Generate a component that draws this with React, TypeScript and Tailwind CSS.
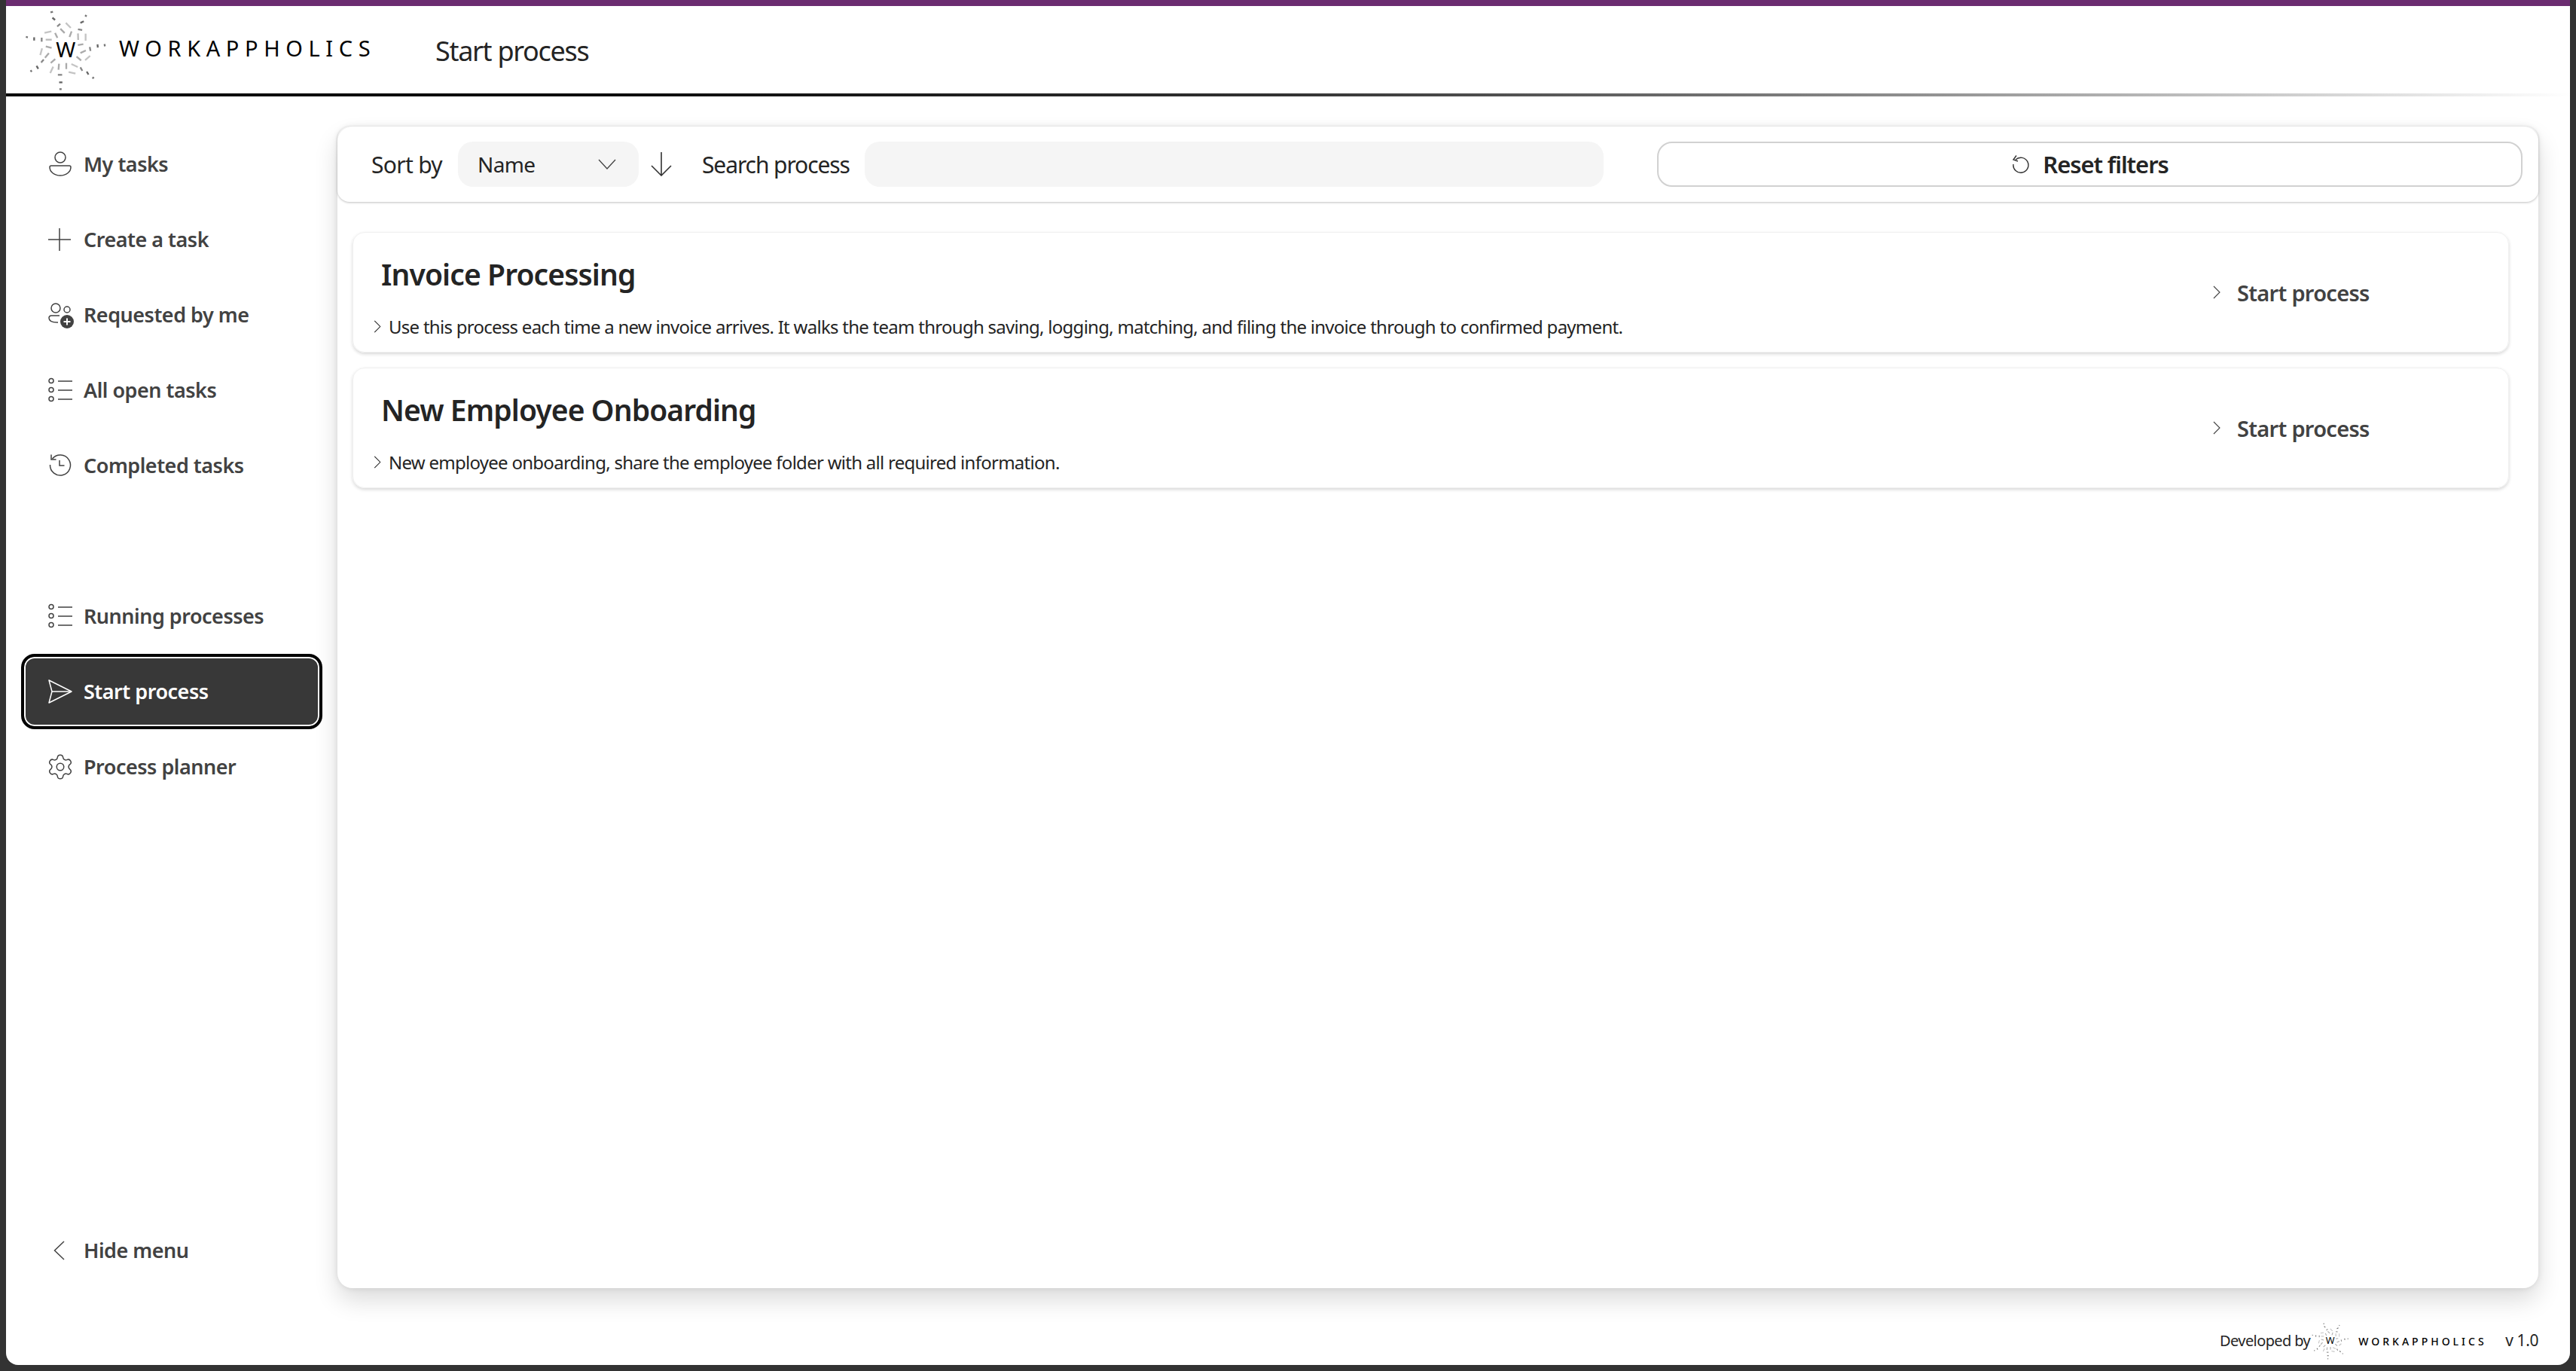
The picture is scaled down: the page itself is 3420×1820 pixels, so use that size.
import React from 'react';
import { Settings } from 'lucide-react';

const FONT = "font-['Noto_Sans','Open_Sans',sans-serif]";

// [x, y, angle, length, grey] in the logo's own coordinates
const LOGO_DASHES: [number, number, number, number, string][] = [
  [147, 45, -15, 10, '#777'], [155, 72, 40, 14, '#666'], [175, 97, -40, 16, '#888'],
  [283, 60, 35, 8, '#777'], [268, 85, -25, 15, '#666'], [260, 115, 10, 17, '#888'],
  [358, 177, 80, 9, '#777'], [330, 180, 85, 13, '#666'], [300, 192, 80, 16, '#888'],
  [312, 307, -45, 8, '#777'], [290, 288, 60, 14, '#666'], [265, 272, 60, 16, '#888'],
  [182, 352, 0, 9, '#777'], [183, 325, 0, 13, '#666'], [180, 295, 0, 17, '#888'],
  [65, 280, 55, 8, '#777'], [90, 265, 60, 14, '#666'], [110, 240, -50, 16, '#888'],
  [48, 145, 15, 8, '#777'], [77, 152, 90, 13, '#666'], [107, 155, 90, 16, '#888'],
  [213, 98, 45, 28, '#c4c4c4'], [132, 125, -12, 28, '#c4c4c4'], [190, 120, 45, 24, '#aaa'],
  [165, 138, 65, 22, '#aaa'], [222, 133, -70, 24, '#aaa'], [252, 143, 88, 26, '#bbb'],
  [282, 145, 90, 28, '#c4c4c4'], [135, 155, 0, 24, '#bbb'], [135, 185, 15, 24, '#aaa'],
  [105, 203, -75, 28, '#c4c4c4'], [128, 218, -50, 24, '#aaa'], [152, 240, -42, 24, '#aaa'],
  [147, 275, -65, 28, '#c4c4c4'], [175, 263, -85, 24, '#aaa'], [205, 260, 90, 24, '#aaa'],
  [238, 258, 25, 28, '#c4c4c4'], [228, 287, 12, 28, '#c4c4c4'], [255, 230, 40, 24, '#aaa'],
  [290, 228, -40, 26, '#c4c4c4'], [272, 203, -25, 24, '#aaa'], [262, 175, -10, 22, '#aaa'],
];

const Logo: React.FC<{ className: string }> = ({ className }) => (
  <svg viewBox="40 30 330 330" className={className}>
    {LOGO_DASHES.map(([x, y, angle, len, fill], i) => (
      <rect
        key={i}
        x={x - len / 2}
        y={y - 3.5}
        width={len}
        height={7}
        fill={fill}
        transform={`rotate(${angle} ${x} ${y})`}
      />
    ))}
    <text x="203" y="224" textAnchor="middle" fontSize="84" fontFamily="Noto Sans, sans-serif" fill="#000">
      W
    </text>
  </svg>
);

const iconClass = 'w-8 h-8 overflow-visible shrink-0';

const PersonIcon = () => (
  <svg viewBox="0 0 32 32" fill="none" stroke="currentColor" strokeWidth="1.5" className={iconClass}>
    <circle cx="16" cy="7" r="7" />
    <path d="M4 18h24a2 2 0 0 1 2 2c0 6-6 11-14 11S2 26 2 20a2 2 0 0 1 2-2z" />
  </svg>
);

const PlusIcon = () => (
  <svg viewBox="0 0 32 32" fill="none" stroke="currentColor" strokeWidth="1.5" className={iconClass}>
    <path d="M15 1v30M0 16h30" />
  </svg>
);

const PeopleAddIcon = () => (
  <svg viewBox="0 0 32 32" fill="none" stroke="currentColor" strokeWidth="1.5" className={iconClass}>
    <circle cx="10" cy="7" r="6" />
    <circle cx="25" cy="9" r="4" />
    <path d="M15 17H4a3 3 0 0 0-3 3c0 3 3 6 11 6h1" />
    <circle cx="25" cy="25" r="9" fill="currentColor" stroke="none" />
    <path d="M25 20.5v9M20.5 25h9" stroke="#fff" strokeWidth="2" />
  </svg>
);

const ListIcon = () => (
  <svg viewBox="0 0 32 32" fill="none" stroke="currentColor" strokeWidth="1.5" className={iconClass}>
    <circle cx="4" cy="3.5" r="3" />
    <circle cx="4" cy="15.5" r="3" />
    <circle cx="4" cy="27.5" r="3" />
    <path d="M13 4h19M13 16h19M13 28h19" />
  </svg>
);

const HistoryIcon = () => (
  <svg viewBox="0 0 32 32" fill="none" stroke="currentColor" strokeWidth="1.5" className={iconClass}>
    <path d="M5.5 7A13.5 13.5 0 1 1 2.5 15" />
    <path d="M4 1.5V8h6.5M15 9v7h6.5" />
  </svg>
);

const SendIcon = () => (
  <svg viewBox="0 0 32 32" fill="none" stroke="currentColor" strokeWidth="1.5" className={iconClass}>
    <path d="M1 1l30 15L1 31l4-15z" strokeLinejoin="round" />
    <path d="M5 16h26" />
  </svg>
);

const GearIcon = () => <Settings size={38} strokeWidth={0.95} className="shrink-0 -mx-[3px]" />;

const HideIcon = () => (
  <svg viewBox="0 0 32 32" fill="none" stroke="currentColor" strokeWidth="1.5" className={iconClass}>
    <path d="M21 4L8.5 16 21 28" />
  </svg>
);

const Chevron: React.FC<{ className: string }> = ({ className }) => (
  <svg viewBox="0 0 10 18" fill="none" stroke="currentColor" strokeWidth="1.1" className={className}>
    <path d="M1 1l8 8-8 8" />
  </svg>
);

type NavItem = { label: string; icon: React.ReactNode; active?: boolean };

const NavRow: React.FC<NavItem> = ({ label, icon, active }) => (
  <div
    className={`h-[100px] flex items-center gap-[15px] rounded-[18px] text-[27px] font-semibold ${
      active
        ? 'bg-[#383838] text-white border-4 border-black shadow-[inset_0_0_0_2px_#fff] pl-[32px]'
        : 'text-[#424242] pl-[36px]'
    }`}
  >
    {icon}
    <span className="tracking-[-0.5px] pt-[1px]">{label}</span>
  </div>
);

const topItems: NavItem[] = [
  { label: 'My tasks', icon: <PersonIcon /> },
  { label: 'Create a task', icon: <PlusIcon /> },
  { label: 'Requested by me', icon: <PeopleAddIcon /> },
  { label: 'All open tasks', icon: <ListIcon /> },
  { label: 'Completed tasks', icon: <HistoryIcon /> },
];

const processItems: NavItem[] = [
  { label: 'Running processes', icon: <ListIcon /> },
  { label: 'Start process', icon: <SendIcon />, active: true },
  { label: 'Process planner', icon: <GearIcon /> },
];

const processes = [
  {
    name: 'Invoice Processing',
    description:
      'Use this process each time a new invoice arrives. It walks the team through saving, logging, matching, and filing the invoice through to confirmed payment.',
  },
  {
    name: 'New Employee Onboarding',
    description: 'New employee onboarding, share the employee folder with all required information.',
  },
];

const ProcessCard: React.FC<{ name: string; description: string }> = ({ name, description }) => (
  <div className="h-[160px] flex rounded-[16px] border border-[#f0f0f0] shadow-[0_2px_4px_rgba(0,0,0,0.16)]">
    <div className="flex-1 flex flex-col pl-[27px]">
      <h2 className="mt-[27px] ml-[10px] h-[56px] leading-[56px] text-[39px] font-semibold text-[#242424] tracking-[-0.9px]">
        {name}
      </h2>
      <div className="mt-[24px] flex items-center gap-[10px] text-[24px] text-[#242424] tracking-[-0.73px]">
        <Chevron className="w-[10px] h-[17px] shrink-0 -mt-[2px]" />
        <span>{description}</span>
      </div>
    </div>
    <div className="w-[392px] flex items-center gap-[22px] text-[#424242] text-[29px] font-semibold">
      <Chevron className="w-[10px] h-[18px] shrink-0" />
      <span className="tracking-[-0.7px] pt-[1px]">Start process</span>
    </div>
  </div>
);

export default function App() {
  return (
    <div className={`h-screen w-screen bg-[#333333] px-2 pb-2 flex flex-col text-[#242424] ${FONT}`}>
      <div className="flex-1 flex flex-col bg-white rounded-b-[16px] overflow-hidden">
        <div className="h-2 bg-[#6b2c70]" />

        <header className="h-[116px] flex items-center">
          <Logo className="w-[110px] h-[110px] ml-[25px] mr-[15px] shrink-0" />
          <span className="w-[420px] text-[29px] tracking-[7.6px] text-black pb-[4px]">WORKAPPHOLICS</span>
          <span className="text-[36px] tracking-[-1.3px] pt-[4px]">Start process</span>
        </header>
        <div className="h-1 bg-gradient-to-r from-black via-[#333333] to-white" />

        <div className="flex-1 flex min-h-0">
          <nav className="w-[440px] shrink-0 flex flex-col pt-[40px] pb-[102px] pl-5 pr-5">
            {topItems.map((item) => (
              <NavRow key={item.label} {...item} />
            ))}
            <div className="h-[100px]" />
            {processItems.map((item) => (
              <NavRow key={item.label} {...item} />
            ))}
            <div className="mt-auto h-[100px] flex items-center pl-[36px] gap-[15px] text-[27px] font-semibold text-[#424242]">
              <HideIcon />
              <span className="tracking-[-0.5px] pt-[1px]">Hide menu</span>
            </div>
          </nav>

          <main className="flex-1 flex flex-col pt-[40px] pr-[42px] min-w-0">
            <section className="flex-1 bg-white rounded-[20px] shadow-[0_0_8px_rgba(0,0,0,0.1),0_16px_32px_rgba(0,0,0,0.14)]">
              <div className="h-[100px] flex items-center pl-[45px] pr-[21px] rounded-[16px] shadow-[0_1px_3px_rgba(0,0,0,0.25)] text-[30px]">
                <span className="w-[115px] tracking-[-0.7px]">Sort by</span>
                <div className="w-[240px] h-[60px] flex items-center justify-between pl-[26px] pr-[30px] rounded-[20px] bg-[#f5f5f5] text-[28px]">
                  <span className="tracking-[-0.6px]">Name</span>
                  <svg viewBox="0 0 24 14" fill="none" stroke="#424242" strokeWidth="1.3" className="w-[24px] h-[14px]">
                    <path d="M1 1l11 12L23 1" />
                  </svg>
                </div>
                <svg viewBox="0 0 28 32" fill="none" stroke="#333" strokeWidth="1.6" className="w-[28px] h-[32px] ml-[16px] shrink-0">
                  <path d="M14 0v31M1 18l13 13 13-13" />
                </svg>
                <span className="ml-[40px] w-[216px] tracking-[-1.1px]">Search process</span>
                <div className="w-[981px] h-[60px] rounded-[20px] bg-[#f5f5f5]" />
                <button className="ml-[71px] flex-1 h-[60px] flex items-center justify-center gap-[16px] rounded-[20px] border-2 border-[#d1d1d1] text-[31px] font-semibold">
                  <svg viewBox="0 0 26 24" fill="none" stroke="#333" strokeWidth="1.4" className="w-[26px] h-[24px]">
                    <path d="M6 6a10 10 0 1 1-3 6" />
                    <path d="M7 0.5L3 6l6 2" />
                  </svg>
                  <span className="tracking-[-1.1px]">Reset filters</span>
                </button>
              </div>
              <div className="pt-[40px] pl-5 pr-[39px] flex flex-col gap-5">
                {processes.map((process) => (
                  <ProcessCard key={process.name} {...process} />
                ))}
              </div>
            </section>
            <footer className="h-[102px] pt-[38px] flex items-start justify-end">
              <div className="h-[64px] flex items-center">
                <span className="text-[20px] tracking-[-0.6px]">Developed by</span>
                <Logo className="w-[50px] h-[50px] ml-[2px] mr-[12px]" />
                <span className="w-[195px] text-[14px] font-medium tracking-[4px] text-black">WORKAPPHOLICS</span>
                <span className="text-[21px] tracking-[-0.4px]">v 1.0</span>
              </div>
            </footer>
          </main>
        </div>
      </div>
    </div>
  );
}
